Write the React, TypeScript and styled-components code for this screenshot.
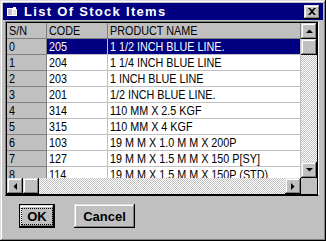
import styled, { createGlobalStyle } from 'styled-components';

const GlobalStyle = createGlobalStyle`
  html, body {
    margin: 0;
    padding: 0;
    background: #c0c0c0;
  }
  body {
    font-family: "Liberation Sans", Arial, sans-serif;
  }
`;

const bevel = `
  box-shadow: inset -1px -1px #000, inset 1px 1px #dfdfdf, inset -2px -2px #808080, inset 2px 2px #fff;
`;

const Window = styled.div`
  box-sizing: border-box;
  width: 326px;
  height: 241px;
  padding: 3px;
  background: #c0c0c0;
  display: flex;
  flex-direction: column;
  box-shadow: inset -1px -1px #000, inset 1px 1px #dfdfdf, inset -2px -2px #808080, inset 2px 2px #fff;
`;

const TitleBar = styled.div`
  height: 17px;
  background: #000080;
  display: flex;
  align-items: center;
  padding: 0 3px 0 3px;
  flex-shrink: 0;
`;

const Title = styled.span`
  color: #fff;
  font-weight: bold;
  font-size: 13px;
  margin-left: 6px;
  letter-spacing: 1.3px;
`;

const CloseButton = styled.div`
  box-sizing: border-box;
  width: 16px;
  height: 14px;
  margin-left: auto;
  background: #c0c0c0;
  display: flex;
  align-items: center;
  justify-content: center;
  ${bevel}
`;

const Body = styled.div`
  padding: 1px 4px 0 2px;
  display: flex;
  flex-direction: column;
`;

// 그리드 바깥 테두리 (움푹 들어간 느낌)
const GridFrame = styled.div`
  box-sizing: border-box;
  width: 314px;
  height: 175px;
  border-top: 1px solid #808080;
  border-left: 1px solid #808080;
  border-right: 1px solid #fff;
  border-bottom: 1px solid #000;
  box-shadow: inset 1px 1px #000, inset -1px -1px #000;
  padding: 1px;
`;

const GridInner = styled.div`
  display: grid;
  grid-template-columns: 294px 16px;
  grid-template-rows: 155px 16px;
`;

const Viewport = styled.div`
  overflow: hidden;
  background: #fff;
`;

const Row = styled.div`
  display: grid;
  grid-template-columns: 40px 61px 193px;
  height: 16px;
`;

const Cell = styled.div<{ $kind: 'header' | 'fixed' | 'data'; $selected?: boolean }>`
  box-sizing: border-box;
  height: 16px;
  padding: 0 0 0 2px;
  font-family: "Liberation Sans", Arial, sans-serif;
  font-size: 13px;
  line-height: 16px;
  white-space: nowrap;
  overflow: hidden;
  background: ${({ $kind, $selected }) =>
    $kind === 'data' ? ($selected ? '#000080' : '#fff') : '#c0c0c0'};
  color: ${({ $selected }) => ($selected ? '#fff' : '#000')};
  border-right: 1px solid ${({ $kind }) => ($kind === 'data' ? '#c0c0c0' : '#808080')};
  border-bottom: 1px solid ${({ $kind }) => ($kind === 'data' ? '#c0c0c0' : '#808080')};
`;

// 원본 그리드 글꼴은 폭이 좁아서 가로로 눌러줌
const CellText = styled.span`
  display: inline-block;
  transform: scaleX(0.83);
  transform-origin: left center;
`;

const ScrollV = styled.div`
  display: flex;
  flex-direction: column;
`;

const ScrollH = styled.div`
  display: flex;
`;

const ScrollButton = styled.div`
  box-sizing: border-box;
  width: 16px;
  height: 16px;
  flex-shrink: 0;
  background: #c0c0c0;
  display: flex;
  align-items: center;
  justify-content: center;
  ${bevel}
`;

const Track = styled.div`
  flex: 1;
  background: repeating-conic-gradient(#c0c0c0 0 25%, #fff 0 50%) 0 0 / 2px 2px;
`;

const Corner = styled.div`
  background: #c0c0c0;
`;

const ButtonRow = styled.div`
  display: flex;
  gap: 19px;
  padding: 8px 0 0 14px;
`;

const PushButton = styled.button<{ $width: number; $default?: boolean }>`
  box-sizing: border-box;
  width: ${({ $width }) => $width}px;
  height: 24px;
  padding: 0;
  background: #c0c0c0;
  font-family: "Liberation Sans", Arial, sans-serif;
  font-weight: bold;
  font-size: 13px;
  color: #000;
  display: flex;
  align-items: center;
  justify-content: center;
  border: ${({ $default }) => ($default ? '1px solid #000' : 'none')};
  ${bevel}
`;

const FocusRing = styled.span`
  box-sizing: border-box;
  border: 1px dotted #000;
  padding: 1px 5px;
  line-height: 13px;
`;

const rows = [
  ['0', '205', '1 1/2 INCH BLUE LINE.'],
  ['1', '204', '1 1/4 INCH BLUE LINE'],
  ['2', '203', '1 INCH BLUE LINE'],
  ['3', '201', '1/2 INCH BLUE LINE.'],
  ['4', '314', '110 MM X 2.5 KGF'],
  ['5', '315', '110 MM X 4 KGF'],
  ['6', '103', '19 M M X 1.0 M M X 200P'],
  ['7', '127', '19 M M X 1.5 M M X 150 P[SY]'],
  ['8', '114', '19 M M X 1.5 M M X 150P (STD)'],
];

const Arrow = ({ dir }: { dir: 'up' | 'down' | 'left' | 'right' }) => {
  const pts = {
    up: '0,4 7,4 3.5,0.5',
    down: '0,0 7,0 3.5,3.5',
    left: '4,0 4,7 0.5,3.5',
    right: '0,0 0,7 3.5,3.5',
  }[dir];
  const vertical = dir === 'up' || dir === 'down';
  return (
    <svg width={vertical ? 7 : 4} height={vertical ? 4 : 7} viewBox={vertical ? '0 0 7 4' : '0 0 4 7'}>
      <polygon points={pts} fill="#000" />
    </svg>
  );
};

const AppIcon = () => (
  <svg width="12" height="11" viewBox="0 0 12 11">
    <path d="M1 2 L7 2 L7 1 L10 1 L10 3 L11 3 L11 10 L1 10 Z" fill="#fff" />
    <path d="M2 3 L6 3 L6 9 L2 9 Z" fill="#c0c0c0" />
    <path d="M7 4 L10 4 L10 9 L7 9 Z" fill="#e0e0e0" />
  </svg>
);

const App = () => {
  return (
    <>
      <GlobalStyle />
      <Window>
        <TitleBar>
          <AppIcon />
          <Title>List Of Stock Items</Title>
          <CloseButton>
            <svg width="8" height="7" viewBox="0 0 8 7">
              <path d="M0 0 L2 0 L4 2 L6 0 L8 0 L5 3.5 L8 7 L6 7 L4 5 L2 7 L0 7 L3 3.5 Z" fill="#000" />
            </svg>
          </CloseButton>
        </TitleBar>

        <Body>
          <GridFrame>
            <GridInner>
              <Viewport>
                <Row>
                  <Cell $kind="header"><CellText>S/N</CellText></Cell>
                  <Cell $kind="header"><CellText>CODE</CellText></Cell>
                  <Cell $kind="header"><CellText>PRODUCT NAME</CellText></Cell>
                </Row>
                {rows.map(([sn, code, name], i) => (
                  <Row key={sn}>
                    <Cell $kind="fixed"><CellText>{sn}</CellText></Cell>
                    <Cell $kind="data" $selected={i === 0}><CellText>{code}</CellText></Cell>
                    <Cell $kind="data" $selected={i === 0}><CellText>{name}</CellText></Cell>
                  </Row>
                ))}
              </Viewport>

              <ScrollV>
                <ScrollButton><Arrow dir="up" /></ScrollButton>
                <ScrollButton />
                <Track />
                <ScrollButton><Arrow dir="down" /></ScrollButton>
              </ScrollV>

              <ScrollH>
                <ScrollButton><Arrow dir="left" /></ScrollButton>
                <ScrollButton />
                <Track />
                <ScrollButton><Arrow dir="right" /></ScrollButton>
              </ScrollH>

              <Corner />
            </GridInner>
          </GridFrame>

          <ButtonRow>
            <PushButton $width={36} $default>
              <FocusRing>OK</FocusRing>
            </PushButton>
            <PushButton $width={61}>Cancel</PushButton>
          </ButtonRow>
        </Body>
      </Window>
    </>
  );
};

export default App;
